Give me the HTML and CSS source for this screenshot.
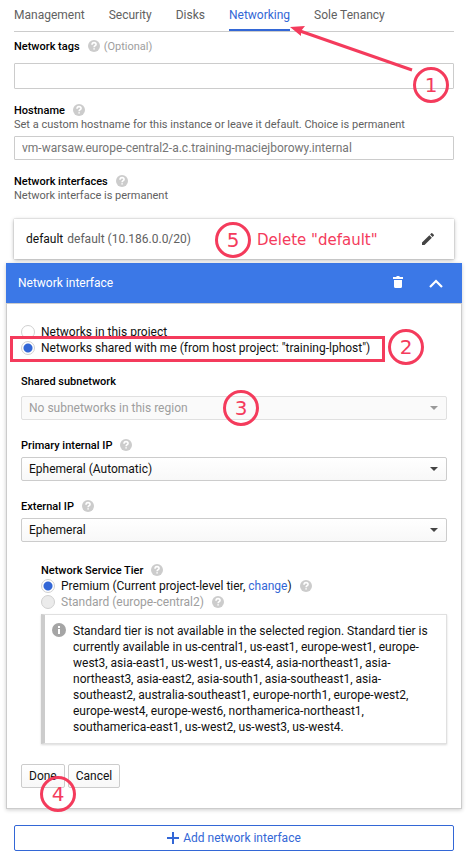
FILE: index.html
```html
<!DOCTYPE html>
<html lang="en">
<head>
<meta charset="utf-8">
<meta name="viewport" content="width=device-width, initial-scale=1">
<title>Networking</title>
<link rel="stylesheet" href="styles.css">
</head>
<body>
<svg class="defs" aria-hidden="true">
  <symbol id="help" viewBox="0 0 12 12">
    <circle cx="6" cy="6" r="6" fill="#ccc"/>
    <path d="M4 4.700C4 3.400 4.900 2.600 6.050 2.600S8.050 3.400 8.050 4.500C8.050 5.700 6.100 5.800 6.100 7.300M6.100 8.300V9.600" fill="none" stroke="#fff" stroke-width="1.600"/>
  </symbol>
</svg>
<main class="page">
  <nav class="tabs">
    <a class="tab" href="#management">Management</a>
    <a class="tab" href="#security">Security</a>
    <a class="tab" href="#disks">Disks</a>
    <a class="tab tab-active" href="#networking">Networking
      <svg class="arrow" viewBox="0 0 124 46" aria-hidden="true"><path d="M122 44L10 5" stroke="#f43b5c" stroke-width="3" fill="none"/><path d="M0 1L15 0L11 5L11 10Z" fill="#f43b5c"/></svg>
    </a>
    <a class="tab" href="#sole-tenancy">Sole Tenancy</a>
  </nav>

  <section class="field field-tags">
    <div class="caption"><label for="tags">Network tags</label><svg class="help"><use href="#help"/></svg><span class="optional">(Optional)</span></div>
    <div class="control"><input class="text text-tall" id="tags" type="text"><span class="mark mark-1">1</span></div>
  </section>

  <section class="field">
    <div class="caption"><label for="hostname">Hostname</label><svg class="help"><use href="#help"/></svg></div>
    <p class="hint">Set a custom hostname for this instance or leave it default. Choice is permanent</p>
    <input class="text" id="hostname" type="text" placeholder="vm-warsaw.europe-central2-a.c.training-maciejborowy.internal">
  </section>

  <section class="field">
    <div class="caption"><h2>Network interfaces</h2><svg class="help"><use href="#help"/></svg></div>
    <p class="hint">Network interface is permanent</p>
  </section>

  <section class="card">
    <span class="card-name">default</span><span class="card-net">default (10.186.0.0/20)</span>
    <span class="mark mark-5">5</span><span class="note">Delete "default"</span>
    <button class="icon-button edit" type="button" aria-label="Edit"><svg width="16" height="16" viewBox="0 0 24 24"><path d="M3 17.250V21h3.750L17.810 9.940l-3.750-3.750zM20.710 7.040a1 1 0 0 0 0-1.410l-2.340-2.340a1 1 0 0 0-1.410 0l-1.830 1.830 3.750 3.750z" fill="#444"/></svg></button>
  </section>

  <section class="panel">
    <header class="panel-head">
      <h2>Network interface</h2>
      <button class="icon-button" type="button" aria-label="Delete"><svg width="16" height="16" viewBox="0 0 16 16"><path d="M3 2h3l1-1h2l1 1h3v2H3zM4 5h8v6.500a1.500 1.500 0 0 1-1.500 1.500h-5A1.500 1.500 0 0 1 4 11.500z" fill="#fff"/></svg></button>
      <button class="icon-button" type="button" aria-label="Collapse"><svg width="16" height="16" viewBox="0 0 16 16"><path d="M2 12l6-6 6 6" fill="none" stroke="#fff" stroke-width="2.200"/></svg></button>
    </header>
    <div class="panel-body">
      <div class="choices">
        <label class="choice"><input type="radio" name="scope"><span>Networks in this project</span></label>
        <label class="choice"><input type="radio" name="scope" checked><span>Networks shared with me (from host project: "training-lphost")</span></label>
        <span class="frame"></span>
        <span class="mark mark-2">2</span>
      </div>

      <div class="group group-subnet">
        <div class="caption"><label for="subnet">Shared subnetwork</label></div>
        <div class="control drop"><select id="subnet" disabled><option>No subnetworks in this region</option></select><span class="mark mark-3">3</span></div>
      </div>

      <div class="group">
        <div class="caption"><label for="internal">Primary internal IP</label><svg class="help"><use href="#help"/></svg></div>
        <div class="control drop"><select id="internal"><option>Ephemeral (Automatic)</option></select></div>
      </div>

      <div class="group">
        <div class="caption"><label for="external">External IP</label><svg class="help"><use href="#help"/></svg></div>
        <div class="control drop"><select id="external"><option>Ephemeral</option></select></div>
      </div>

      <div class="tier">
        <div class="caption"><h3>Network Service Tier</h3><svg class="help"><use href="#help"/></svg></div>
        <div class="choice"><input type="radio" name="tier" id="premium" checked><span><label for="premium">Premium (Current project-level tier, </label><a href="#change">change</a>)</span><svg class="help"><use href="#help"/></svg></div>
        <div class="choice choice-off"><input type="radio" name="tier" id="standard" disabled><label for="standard">Standard (europe-central2)</label><svg class="help"><use href="#help"/></svg></div>
        <div class="info">
          <svg class="info-icon" viewBox="0 0 14 14" aria-hidden="true"><circle cx="7" cy="7" r="7" fill="#a5a5a5"/><path d="M6 3h2v2H6zM6 6h2v5H6z" fill="#fff"/></svg>
          <p>Standard tier is not available in the selected region. Standard tier is currently available in us-central1, us-east1, europe-west1, europe-west3, asia-east1, us-west1, us-east4, asia-northeast1, asia-northeast3, asia-east2, asia-south1, asia-southeast1, asia-southeast2, australia-southeast1, europe-north1, europe-west2, europe-west4, europe-west6, northamerica-northeast1, southamerica-east1, us-west2, us-west3, us-west4.</p>
        </div>
      </div>

      <div class="actions">
        <button class="button" type="button">Done</button>
        <button class="button" type="button">Cancel</button>
        <span class="mark mark-4">4</span>
      </div>
    </div>
  </section>

  <button class="add" type="button"><svg width="12" height="12" viewBox="0 0 12 12" aria-hidden="true"><path d="M5 0h2v5h5v2H7v5H5V7H0V5h5z" fill="#3367d6"/></svg>Add network interface</button>
</main>
</body>
</html>
```
FILE: styles.css
```css
* {
  box-sizing: border-box;
}

body {
  margin: 0;
  background: #fff;
  color: #111;
  font: 12px/16px Roboto, "Liberation Sans", sans-serif;
}

h2,
h3,
p {
  margin: 0;
  font: inherit;
}

a {
  color: #3367d6;
  text-decoration: none;
}

button,
input,
select {
  font: inherit;
  color: inherit;
}

.defs {
  position: absolute;
  width: 0;
  height: 0;
}

.page {
  padding: 0 21px 12px 14px;
}

/* Tabs */
.tabs {
  display: flex;
  gap: 24px;
  border-bottom: 1px solid #ccc;
}

.tab {
  position: relative;
  padding: 7px 0 6px;
  border-bottom: 2px solid transparent;
  color: #616161;
}

.tab-active {
  border-color: #3367d6;
  color: #3367d6;
}

.arrow {
  position: absolute;
  z-index: 1;
  left: 100%;
  top: 26px;
  width: 124px;
  height: 46px;
}

/* Fields */
.caption {
  display: flex;
  align-items: center;
  height: 14px;
  font-size: 11px;
  font-weight: 500;
  line-height: 14px;
  color: #000;
}

.caption h2,
.caption h3 {
  font-weight: 500;
}

.caption label,
.caption h2,
.caption h3,
.caption span {
  padding-top: 2px;
}

.help {
  width: 12px;
  height: 12px;
  margin-left: 8px;
}

.optional {
  margin-left: 4px;
  font-weight: 400;
  color: #9e9e9e;
}

.hint {
  font-size: 11px;
  line-height: 16px;
  color: #616161;
}

.field {
  margin-top: 14px;
}

.field-tags {
  margin-top: 7px;
}

.field-tags .control {
  margin-top: 10px;
}

.control {
  position: relative;
}

.text {
  display: block;
  width: 100%;
  height: 24px;
  padding: 0 7px;
  border: 1px solid #ccc;
  border-radius: 1px;
  background: #fff;
}

.hint + .text {
  margin-top: 3px;
}

.text-tall {
  height: 26px;
}

.text::placeholder {
  color: #757575;
  opacity: 1;
}

/* Existing interface */
.card {
  position: relative;
  display: flex;
  align-items: center;
  gap: 4px;
  height: 40px;
  margin-top: 15px;
  padding: 0 18px 0 12px;
  box-shadow: 0 0 1px rgba(0, 0, 0, .3), 0 1px 4px rgba(0, 0, 0, .3);
}

.card-net {
  color: #616161;
}

.edit {
  margin-left: auto;
}

.icon-button {
  display: flex;
  padding: 0;
  border: 0;
  background: none;
}

/* Expanded interface */
.panel {
  margin: 4px -8px 0;
  box-shadow: 0 1px 4px rgba(0, 0, 0, .2);
}

.panel-head {
  display: flex;
  align-items: center;
  gap: 22px;
  height: 40px;
  padding: 0 18px 0 12px;
  background: #3b78e7;
  color: #fff;
}

.panel-head h2 {
  flex: 1;
}

.panel-body {
  padding: 20px 14px;
  border: 1px solid #ccc;
}

.choices {
  position: relative;
}

.choice {
  display: flex;
  align-items: center;
  height: 16px;
  white-space: pre;
}

.choice input {
  appearance: none;
  flex: none;
  width: 14px;
  height: 14px;
  margin: 0 6px 0 0;
  border: 1px solid #d0d0d0;
  border-radius: 50%;
  background: #fff;
}

.choice input:checked {
  background: radial-gradient(circle, #3367d6 4px, #fff 5px);
}

.choice input:disabled {
  background: #ebebeb;
}

.choice-off {
  color: #9e9e9e;
}

.group {
  margin-top: 18px;
}

.group .control {
  margin-top: 5px;
}

.group-subnet .control {
  margin-top: 8px;
}

.drop select {
  appearance: none;
  display: block;
  width: 100%;
  height: 24px;
  padding: 0 24px 0 7px;
  border: 1px solid #ccc;
  border-radius: 2px;
  background: linear-gradient(#fff, #f8f8f8);
}

.drop select:disabled {
  border-color: #e0e0e0;
  background: #fafafa;
  color: #9e9e9e;
  opacity: 1;
}

.drop::after {
  content: "";
  position: absolute;
  right: 9px;
  top: 10px;
  border: 4px solid transparent;
  border-top-color: #444;
  border-bottom: 0;
}

.group-subnet .drop::after {
  border-top-color: #999;
}

.tier {
  margin: 21px 0 0 20px;
}

.tier .caption {
  margin-bottom: 1px;
}

.info {
  display: flex;
  gap: 7px;
  margin-top: 4px;
  padding: 8px 12px 8px 7px;
  border: 1px solid #e0e0e0;
  border-left: 4px solid #ccc;
  box-shadow: 0 1px 2px rgba(0, 0, 0, .15);
}

.info-icon {
  flex: none;
  width: 14px;
  height: 14px;
}

.actions {
  position: relative;
  display: flex;
  gap: 3px;
  margin-top: 20px;
}

.button {
  height: 24px;
  padding: 0 7px;
  border: 1px solid #ccc;
  border-radius: 2px;
  background: linear-gradient(#fff, #f8f8f8);
}

.add {
  display: flex;
  align-items: center;
  justify-content: center;
  gap: 4px;
  width: 100%;
  height: 26px;
  margin-top: 16px;
  padding: 0;
  border: 1px solid #3367d6;
  border-radius: 2px;
  background: #fff;
  color: #3367d6;
}

/* Step annotations drawn over the form */
.mark {
  position: absolute;
  z-index: 2;
  width: 36px;
  height: 36px;
  border: 3px solid #f43b5c;
  border-radius: 50%;
  color: #f43b5c;
  font: 20px/30px "DejaVu Sans", sans-serif;
  text-align: center;
}

.mark-1 {
  right: 5px;
  top: 4px;
}

.mark-2 {
  left: 367px;
  top: 5px;
}

.mark-3 {
  left: 202px;
  top: -6px;
}

.mark-4 {
  left: 19px;
  top: 12px;
}

.mark-5 {
  left: 201px;
  top: 3px;
}

.note {
  position: absolute;
  left: 243px;
  top: 11px;
  color: #f43b5c;
  font: 15px/20px "DejaVu Sans", sans-serif;
}

.frame {
  position: absolute;
  left: -11px;
  top: 12px;
  width: 375px;
  height: 26px;
  border: 3px solid #f43b5c;
}
```
